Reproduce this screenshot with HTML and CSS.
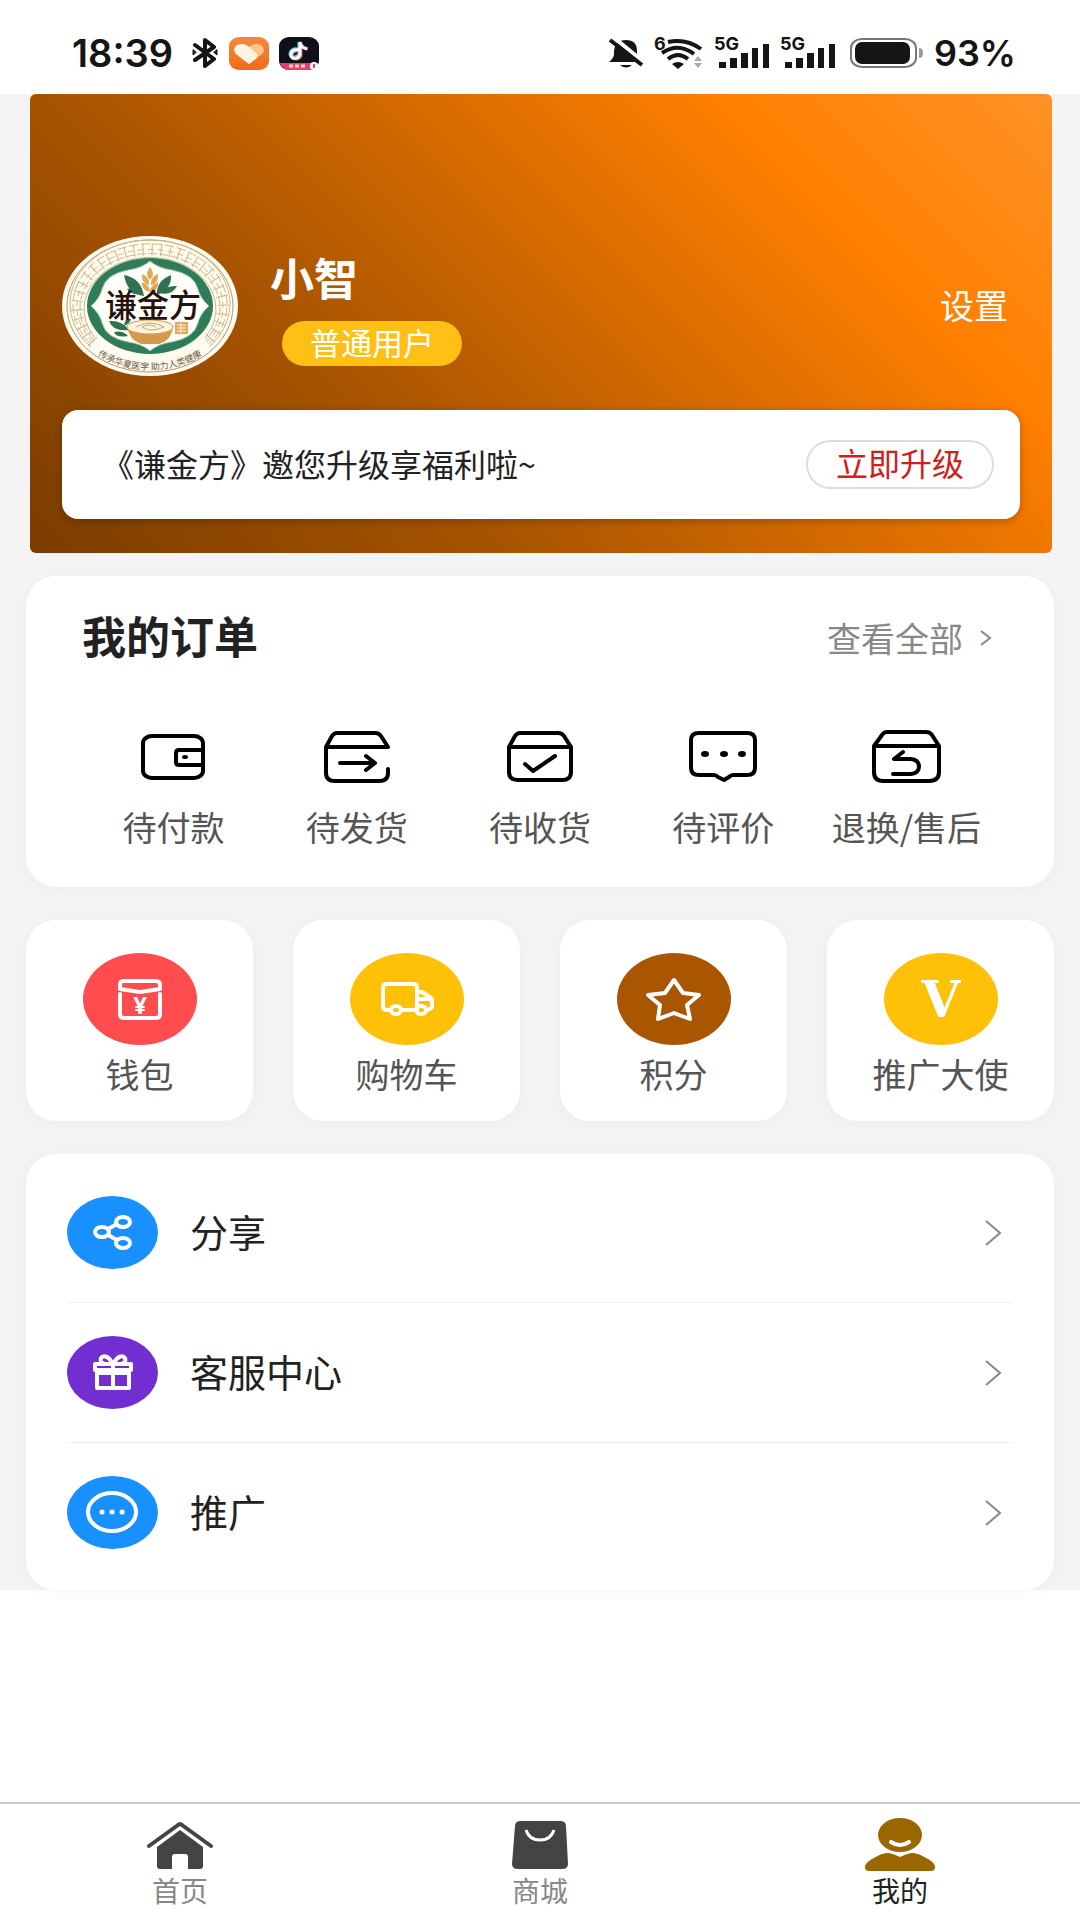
FILE: index.html
```html
<!DOCTYPE html>
<html lang="zh-CN">
<head>
<meta charset="utf-8">
<meta name="viewport" content="width=device-width, initial-scale=1">
<title>我的</title>
<link rel="stylesheet" href="styles.css">
</head>
<body>
<header class="status">
  <div class="status-group status-left">
    <span class="status-text clock">18:39</span>
    <svg class="bluetooth" width="28" height="30" viewBox="0 0 28 30" fill="none" stroke="#151515" stroke-width="4" stroke-linejoin="round" stroke-linecap="round"><path d="M4 7l19 14-9 7V2l9 7L4 22"/><path d="M2 12v5l3-2.500zM26 12v5l-3-2.500z" fill="#151515" stroke-width="1"/></svg>
    <svg width="40" height="33" viewBox="0 0 40 33"><defs><linearGradient id="heart-bg" x1="0" y1="0" x2="0" y2="1"><stop offset="0" stop-color="#f58a3c"/><stop offset="1" stop-color="#f26a1b"/></linearGradient></defs><rect width="40" height="33" rx="10" ry="9" fill="url(#heart-bg)"/><path d="M20 27L7 17C3 12 7 7 12 7c4 0 6 1 8 3 2-2 5-3 8-3 6 0 9 6 5 10z" fill="#fbc58c"/><path d="M20 27L7 17C3 12 7 7 12 7c3 0 5 1 7 2l8 7c3 3 0 6-2 7z" fill="#fff3e4"/></svg>
    <svg width="40" height="33" viewBox="0 0 40 33"><rect width="40" height="33" rx="10" ry="9" fill="#10101a"/><path d="M1 26h38q-1 7-9 7H10Q3 33 1 26z" fill="#e83f68"/><path d="M10 29h17" stroke="#ffd3dc" stroke-width="3" stroke-dasharray="4 2"/><circle cx="35" cy="29" r="4" fill="#fff"/><path d="M35 27v4" stroke="#e83f68" stroke-width="2"/><g fill="none" stroke-width="3"><path d="M19 12c-5-1-8 2-8 5s6 5 9 0V5c1 4 3 5 7 6" stroke="#35dfe3"/><path d="M21 14c-5-1-8 2-8 5s6 5 9 0V6c1 4 3 5 7 6" stroke="#f4476b"/><path d="M20 13c-5-1-8 1-8 5s7 5 9 0V5c1 5 3 6 7 7" stroke="#fff"/></g></svg>
  </div>
  <div class="status-group">
    <svg width="36" height="32" viewBox="0 0 36 32"><path d="M1 25q5-4 5-8v-3Q7 3 18 3t11 11v3q0 4 5 8zM12 28h12q-6 5-12 0z" fill="#151515"/><path d="M4 -1l34 28" stroke="#fff" stroke-width="4"/><path d="M2 3l32 25" stroke="#151515" stroke-width="4"/></svg>
    <svg width="50" height="36" viewBox="0 0 50 36"><text x="0" y="15" class="tiny">6</text><g fill="none" stroke="#151515" stroke-width="4"><path d="M14 7q18-4 33 7"/><path d="M8 18q16-11 32 1"/><path d="M14 24q10-8 20 0"/></g><path d="M18 29q6-4 12 0l-6 5z" fill="#151515"/><path d="M40 26l4-5 4 5zM40 28l4 5 4-5z" fill="#aaa"/></svg>
    <svg width="56" height="36" viewBox="0 0 56 36"><text x="0" y="15" class="tiny">5G</text><path d="M5 27h7v6H5zM16 23h7v10h-7zM27 18h7v15h-7zM38 13h6v20h-6zM49 9h6v24h-6z" fill="#151515"/></svg>
    <svg width="56" height="36" viewBox="0 0 56 36"><text x="0" y="15" class="tiny">5G</text><path d="M5 27h7v6H5zM16 23h7v10h-7zM27 18h7v15h-7zM38 13h6v20h-6zM49 9h6v24h-6z" fill="#151515"/></svg>
    <svg class="battery" width="74" height="30" viewBox="0 0 74 30"><rect x="1" y="1" width="65" height="28" rx="11" ry="9" fill="none" stroke="#777" stroke-width="2"/><rect x="5" y="4" width="55" height="22" rx="7" fill="#151515"/><path d="M69 10q4 0 4 5t-4 5z" fill="#999"/></svg>
    <span class="status-text">93%</span>
  </div>
</header>

<main class="page">
  <section class="hero">
    <div class="profile">
      <svg class="avatar" viewBox="0 0 176 141" role="img" aria-label="谦金方">
        <defs><path id="motto-arc" d="M29 115Q56 134 88 134T147 115"/></defs>
        <ellipse cx="88" cy="70" rx="88" ry="70" fill="#fffbee"/>
        <ellipse cx="88" cy="70" rx="83" ry="66" fill="none" stroke="#b79b6b"/>
        <g fill="none" stroke="#cdb78c">
          <path d="M29 111A80 64 0 1 1 147 111"/>
          <path d="M33 102A66 52 0 1 1 143 102"/>
          <path d="M29 108A77 61 0 1 1 147 108" stroke-dasharray="9 3"/>
          <path d="M31 106A73 57 0 1 1 145 106" stroke-dasharray="6 4"/>
          <path d="M32 104A70 54 0 1 1 144 104" stroke-dasharray="9 2"/>
          <path d="M31 106A73 57 0 1 1 145 106" stroke-width="12" stroke-dasharray="1 8"/>
        </g>
        <ellipse cx="88" cy="70" rx="63" ry="48" fill="#2f7d58"/>
        <path d="M88 25q8 7 22 9 22 4 26 19 2 9 11 17-9 8-11 17-4 15-26 19-14 2-22 9-8-7-22-9-22-4-26-19-2-9-11-17 9-8 11-17 4-15 26-19 14-2 22-9z" fill="#fffefa" stroke="#8fc0a2"/>
        <g fill="#2f7250"><path d="M82 60Q65 58 62 39q17 3 20 21zM80 58q-10 2-15-5 9-3 15 5zM95 59q-1-14 14-20 1 14-14 20zM97 57q8-8 18-7-5 10-18 7zM67 94Q51 96 47 85q13-1 20 9zM66 100q-12 2-14-4 9-2 14 4zM62 90q1-9 7-7-1 5-7 7z"/></g>
        <g fill="#e0a95c"><path d="M88 31q6 7 0 13-6-6 0-13zM80 38q8 3 7 11-8-2-7-11zM96 38q-8 3-7 11 8-2 7-11zM80 46q8 3 8 10-9-2-8-10zM96 46q-8 3-8 10 9-2 8-10z"/><rect x="113" y="86" width="13" height="12"/></g>
        <path d="M115 89h9m-9 3h9m-9 3h9m-5-8v10" stroke="#fff3d0" fill="none"/>
        <path d="M65 90q2 14 14 18h18q13-4 14-18z" fill="#d39a4c"/>
        <ellipse cx="88" cy="91" rx="23" ry="7" fill="#fbf3dc" stroke="#d39a4c"/>
        <path d="M74 91q14-8 28 0-14 6-22 0 8-4 14 0" fill="none" stroke="#c4a97a"/>
        <text x="91" y="81" text-anchor="middle" class="brand">谦金方</text>
        <text class="motto"><textPath href="#motto-arc" startOffset="50%" text-anchor="middle">传承华夏医学 助力人类健康</textPath></text>
      </svg>
      <div class="identity">
        <h1 class="name">小智</h1>
        <span class="badge">普通用户</span>
      </div>
      <a class="settings" href="#">设置</a>
    </div>
    <div class="upgrade">
      <p class="upgrade-text">《谦金方》邀您升级享福利啦~</p>
      <button class="upgrade-button" type="button">立即升级</button>
    </div>
  </section>

  <section class="card orders">
    <div class="orders-head">
      <h2 class="orders-title">我的订单</h2>
      <a class="orders-all" href="#">查看全部<svg width="12" height="16" viewBox="0 0 12 16" fill="none" stroke="#888" stroke-width="2"><path d="M1 1l9 7-9 7"/></svg></a>
    </div>
    <nav class="order-grid">
      <a class="order" href="#"><svg class="order-icon" viewBox="0 0 72 60"><rect x="5" y="9" width="60" height="42" rx="9" ry="7"/><path d="M65 23H41q-3 0-3 3v9q0 3 3 3h24"/><ellipse class="dot" cx="47" cy="30" rx="3" ry="2"/></svg>待付款</a>
      <a class="order" href="#"><svg class="order-icon" viewBox="0 0 72 60"><path d="M67 20H5v26q0 8 9 8h44q9 0 9-8v-4M5 20l6-11q2-3 5-3h38q4 0 6 3l7 11M19 36h33M45 29l9 7-9 7"/></svg>待发货</a>
      <a class="order" href="#"><svg class="order-icon" viewBox="0 0 72 60"><path d="M67 20H5v25q0 8 9 8h44q9 0 9-8V20L60 9q-2-3-6-3H16q-3 0-5 3L5 20M21 37l8 7 22-15"/></svg>待收货</a>
      <a class="order" href="#"><svg class="order-icon" viewBox="0 0 72 60"><path d="M12 6h48q8 0 8 7v28q0 7-8 7H46q-2 0-4 2l-5 3-6-3q-2-2-4-2H12q-8 0-8-7V13q0-7 8-7z"/><g class="dot"><ellipse cx="18" cy="27" rx="4" ry="3"/><ellipse cx="37" cy="27" rx="4" ry="3"/><ellipse cx="55" cy="27" rx="4" ry="3"/></g></svg>待评价</a>
      <a class="order" href="#"><svg class="order-icon" viewBox="0 0 72 60"><path d="M69 19H4v26q0 9 9 9h46q10 0 10-9V19L62 8q-2-3-6-3H17q-3 0-5 3L4 19M33 25l-9 7h17q8 1 8 7.500T41 47H23"/></svg>退换/售后</a>
    </nav>
  </section>

  <nav class="quick-grid">
    <a class="card quick" href="#"><svg class="quick-icon red" viewBox="0 0 114 92"><path d="M40 28h33q4 0 4 4v4l-20 3-20-3v-4q0-4 3-4zM37 41v20q0 4 4 4h32q4 0 4-4V41"/><text x="57" y="61" text-anchor="middle" class="yen">¥</text></svg>钱包</a>
    <a class="card quick" href="#"><svg class="quick-icon yellow" viewBox="0 0 114 92"><path d="M40 57h-3q-4 0-4-4V35q0-4 4-4h26q4 0 4 4v22H52M67 39h5l9 6q1 1 1 3v5q0 3-5 4M67 46h14M67 40v17"/><ellipse cx="46" cy="57" rx="5" ry="4"/><ellipse cx="71" cy="57" rx="5" ry="4"/></svg>购物车</a>
    <a class="card quick" href="#"><svg class="quick-icon brown" viewBox="0 0 114 92"><path d="M57 27l9 13 16 2-12 10 3 14-16-6-16 6 2-14-12-10 17-2z"/></svg>积分</a>
    <a class="card quick" href="#"><svg class="quick-icon yellow" viewBox="0 0 114 92"><text x="57" y="64" text-anchor="middle" class="vip">V</text></svg>推广大使</a>
  </nav>

  <nav class="card menu">
    <a class="menu-row" href="#"><svg class="menu-icon blue" viewBox="0 0 91 73"><ellipse cx="35" cy="36" rx="7" ry="5"/><ellipse cx="56" cy="26" rx="7" ry="5"/><ellipse cx="56" cy="47" rx="7" ry="5"/><path d="M41 33l9-5M41 39l9 5"/></svg><span class="menu-label">分享</span><svg class="chevron" viewBox="0 0 18 28"><path d="M2 2l14 12L2 26"/></svg></a>
    <a class="menu-row" href="#"><svg class="menu-icon purple" viewBox="0 0 91 73"><path d="M28 28h36v6H28zM30 37h32v15H30zM46 28v24M45 27c-3-7-9-8-11-5-1 3 0 5 2 5M47 27c3-7 9-8 11-5 1 3 0 5-2 5"/></svg><span class="menu-label">客服中心</span><svg class="chevron" viewBox="0 0 18 28"><path d="M2 2l14 12L2 26"/></svg></a>
    <a class="menu-row" href="#"><svg class="menu-icon blue" viewBox="0 0 91 73"><ellipse cx="45" cy="36" rx="24" ry="19"/><path d="M35 36h.1M45 36h.1M55 36h.1" stroke-width="5"/></svg><span class="menu-label">推广</span><svg class="chevron" viewBox="0 0 18 28"><path d="M2 2l14 12L2 26"/></svg></a>
  </nav>
</main>

<nav class="tabbar">
  <a class="tab" href="#"><svg class="tab-icon" viewBox="0 0 70 54"><path d="M4 29L33 8q2-2 4 0l29 21" fill="none" stroke="#444" stroke-width="4" stroke-linecap="round"/><path d="M35 13L58 30v19q0 3-3 3H43V40q0-3-3-3H30q-3 0-3 3v12H15q-3 0-3-3V30z" fill="#444"/></svg>首页</a>
  <a class="tab" href="#"><svg class="tab-icon" viewBox="0 0 70 54"><path d="M16 4h39q6 0 6 5l2 38q0 5-6 5H13q-6 0-6-5L10 9q0-5 6-5z" fill="#444"/><path d="M21 13q3 10 14 10t14-10" fill="none" stroke="#fff" stroke-width="3"/></svg>商城</a>
  <a class="tab active" href="#" aria-current="page"><svg class="tab-icon" viewBox="0 0 70 54"><ellipse cx="35" cy="18" rx="22" ry="17" fill="#960"/><path d="M26 25q9 6 18 0" fill="none" stroke="#fff" stroke-width="4" stroke-linecap="round"/><path d="M4 54q-4 0-4-4 0-4 7-8 11-7 17-6 5 1 11 4 6-3 11-4 6-1 17 6 7 4 7 8 0 4-4 4z" fill="#960"/></svg>我的</a>
</nav>
</body>
</html>
```
FILE: styles.css
```css
* { box-sizing: border-box; }

body {
  margin: 0;
  min-height: 100vh;
  display: flex;
  flex-direction: column;
  background: #fff;
  color: #222;
  font-family: "Noto Sans CJK SC", sans-serif;
}

a { color: inherit; text-decoration: none; }
h1, h2, p { margin: 0; }
svg { flex: none; }

/* Status bar */
.status {
  display: flex;
  justify-content: space-between;
  align-items: center;
  height: 94px;
  padding: 12px 64px 0 72px;
}
.status-group { display: flex; align-items: center; gap: 10px; }
.status-text {
  font: 600 36px/40px Inter, sans-serif;
  color: #151515;
}
.clock { font-size: 38px; }
.bluetooth { margin-left: 8px; }
.battery { margin-left: 4px; }
.tiny { font: 700 18px Inter, sans-serif; fill: #151515; }

/* Page */
.page {
  background: #f4f4f4;
  padding: 0 26px;
}
.card {
  background: #fff;
  border-radius: 30px;
  box-shadow: 0 2px 16px rgba(0, 0, 0, 0.04);
}

/* Profile banner */
.hero {
  margin: 0 2px 0 4px;
  padding: 142px 32px 34px;
  border-radius: 6px;
  background: linear-gradient(45deg, #7a3c00 0%, #a85400 33%, #ff7f00 77%, #ff9226 100%);
}
.profile {
  display: flex;
  align-items: center;
  color: #fff;
}
.avatar { width: 176px; height: 141px; }
.brand {
  font: 500 32px "Noto Sans CJK SC", sans-serif;
  fill: #24130c;
}
.motto {
  font: 9px "Noto Sans CJK SC", sans-serif;
  fill: #6b5a45;
}
.identity {
  flex: 1;
  display: flex;
  flex-direction: column;
  align-items: flex-start;
  gap: 14px;
  padding-left: 32px;
}
.name {
  font-size: 44px;
  line-height: 60px;
  font-weight: 700;
}
.badge {
  margin-left: 12px;
  padding: 0 28px 4px;
  border-radius: 24px;
  background: #ffc015;
  font-size: 31px;
  line-height: 41px;
}
.settings {
  padding: 0 12px 4px 0;
  font-size: 34px;
  line-height: 44px;
}
.upgrade {
  display: flex;
  align-items: center;
  justify-content: space-between;
  margin-top: 33px;
  padding: 30px 26px 30px 40px;
  border-radius: 16px;
  background: #fff;
  box-shadow: 0 2px 8px rgba(0, 0, 0, 0.25);
}
.upgrade-text {
  padding-bottom: 4px;
  font-size: 32px;
  line-height: 44px;
}
.upgrade-button {
  padding: 0 28px 4px;
  border: 2px solid #ddd;
  border-radius: 26px;
  background: #fff;
  color: #cf201a;
  font: 32px/41px "Noto Sans CJK SC", sans-serif;
}

/* Orders */
.orders {
  margin-top: 23px;
  padding: 32px 56px 38px;
}
.orders-head {
  display: flex;
  align-items: center;
  justify-content: space-between;
  padding-right: 6px;
}
.orders-title {
  padding-bottom: 6px;
  font-size: 44px;
  line-height: 54px;
  font-weight: 700;
}
.orders-all {
  display: flex;
  align-items: center;
  gap: 17px;
  color: #888;
  font-size: 34px;
  line-height: 48px;
}
.order-grid {
  display: grid;
  grid-template-columns: repeat(5, 1fr);
  margin-top: 59px;
}
.order {
  display: flex;
  flex-direction: column;
  align-items: center;
  gap: 18px;
  color: #555;
  font-size: 34px;
  line-height: 44px;
  white-space: nowrap;
}
.order-icon {
  width: 72px;
  height: 60px;
  fill: none;
  stroke: #000;
  stroke-width: 4;
  stroke-linecap: round;
  stroke-linejoin: round;
}
.order-icon .dot { fill: #000; stroke: none; }

/* Shortcuts */
.quick-grid {
  display: grid;
  grid-template-columns: repeat(4, 1fr);
  gap: 40px;
  margin-top: 33px;
}
.quick {
  display: flex;
  flex-direction: column;
  align-items: center;
  gap: 7px;
  padding: 33px 0 25px;
  color: #555;
  font-size: 34px;
  line-height: 44px;
}
.quick-icon {
  width: 114px;
  height: 92px;
  border-radius: 50%;
  fill: none;
  stroke: #fff;
  stroke-width: 4;
  stroke-linecap: round;
  stroke-linejoin: round;
}
.yen, .vip { fill: #fff; stroke: none; }
.yen { font: 700 24px "Noto Sans", sans-serif; }
.vip { font: 700 50px "DejaVu Serif", serif; }

.red { background: #ff4d4f; }
.yellow { background: #ffc107; }
.brown { background: #aa5500; }
.blue { background: #1890ff; }
.purple { background: #722ed1; }

/* Menu */
.menu {
  margin-top: 33px;
  padding: 9px 41px 8px;
}
.menu-row {
  display: flex;
  align-items: center;
  padding: 33px 11px 33px 0;
}
.menu-row + .menu-row { border-top: 1px solid #eee; }
.menu-icon {
  width: 91px;
  height: 73px;
  border-radius: 50%;
  fill: none;
  stroke: #fff;
  stroke-width: 4;
  stroke-linecap: round;
  stroke-linejoin: round;
}
.menu-label {
  flex: 1;
  padding: 0 0 4px 32px;
  font-size: 38px;
  line-height: 54px;
}
.chevron {
  width: 18px;
  height: 28px;
  fill: none;
  stroke: #888;
  stroke-width: 2;
}

/* Tab bar */
.tabbar {
  display: grid;
  grid-template-columns: repeat(3, 1fr);
  margin-top: auto;
  padding: 13px 0 14px;
  border-top: 2px solid #ccc;
}
.tab {
  display: flex;
  flex-direction: column;
  align-items: center;
  gap: 3px;
  color: #888;
  font-size: 28px;
  line-height: 32px;
}
.tab-icon { width: 70px; height: 54px; }
.active { color: #222; }
```
